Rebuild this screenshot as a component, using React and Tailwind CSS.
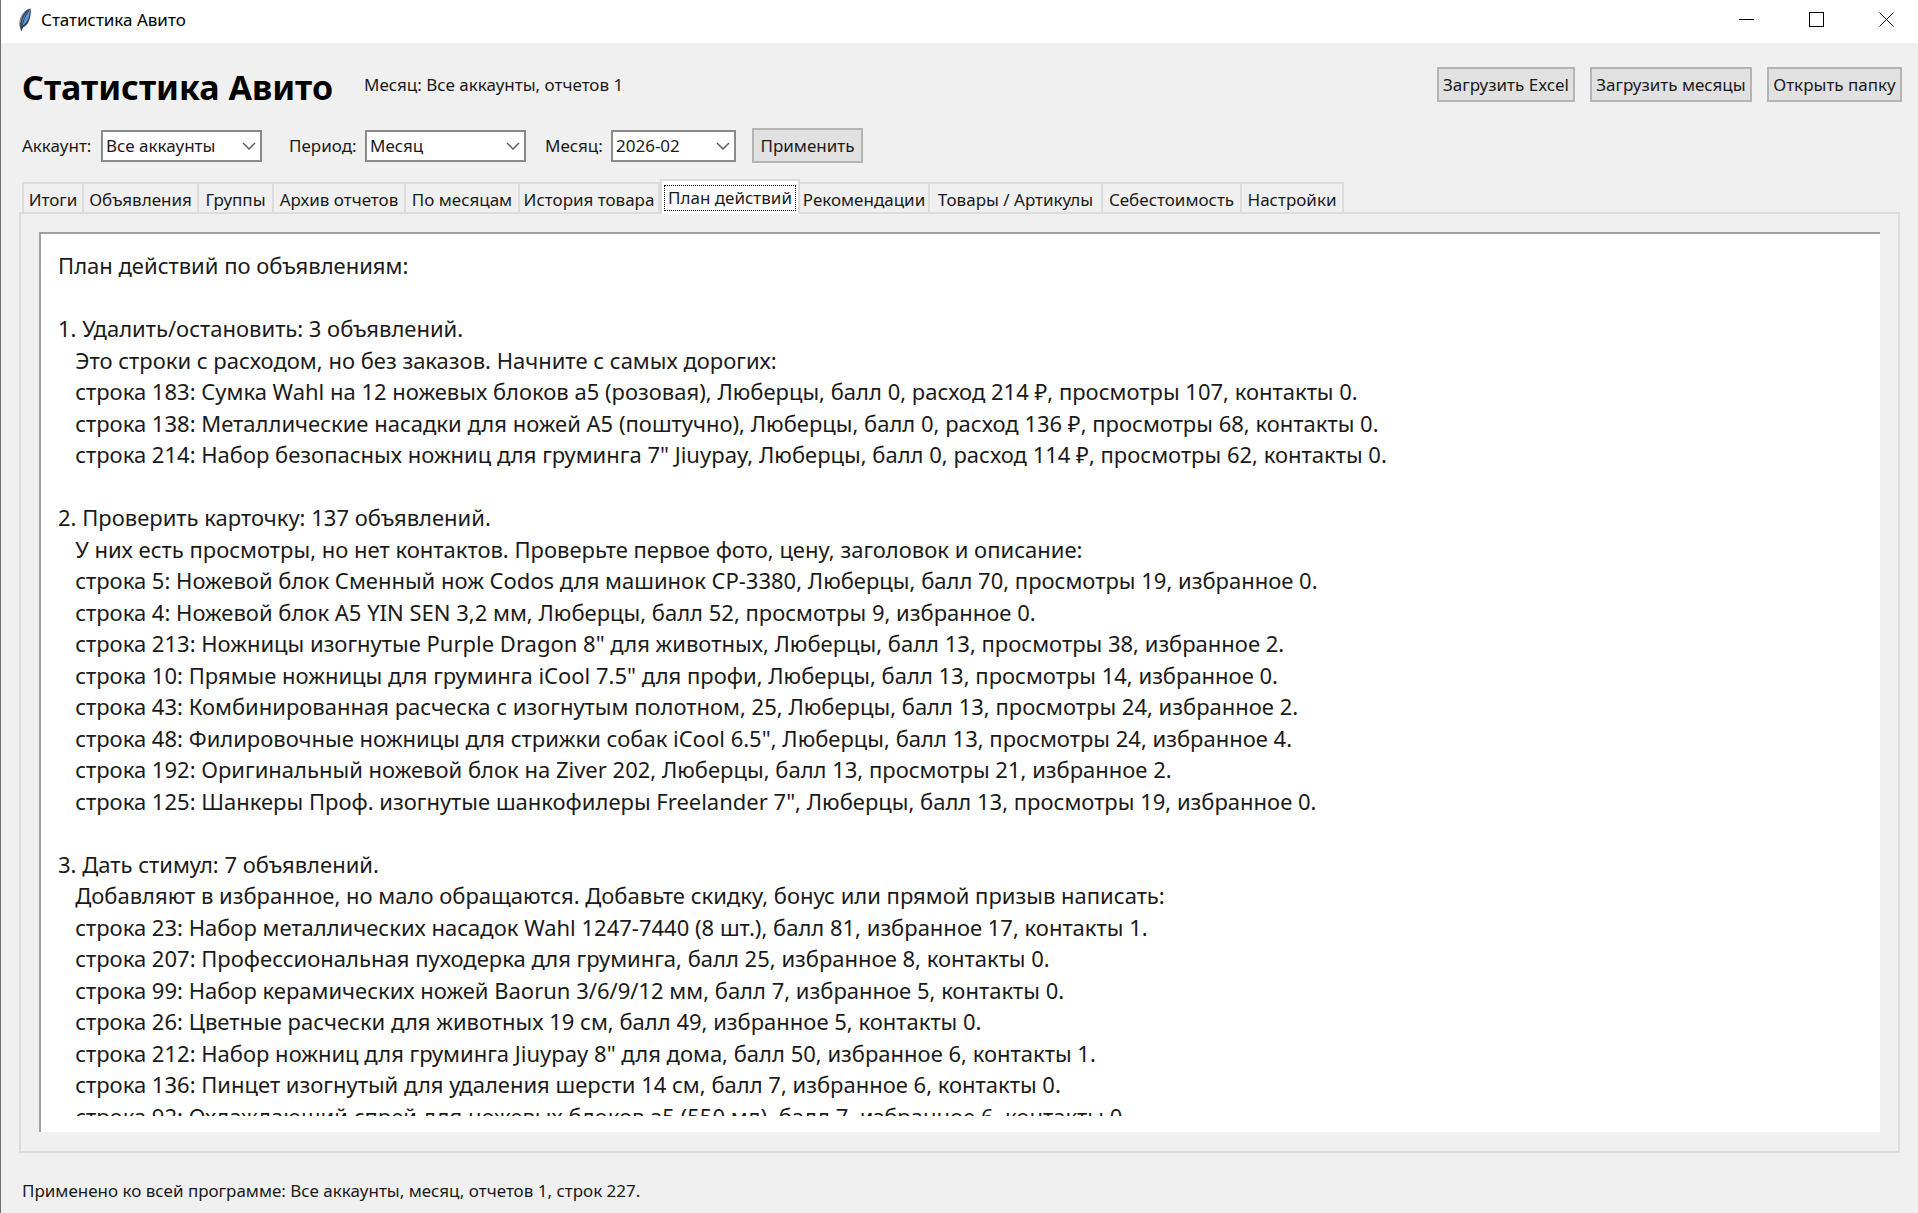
import React, { useState } from 'react';
import clsx from 'clsx';

const TABS = [
  { label: 'Итоги', width: 'w-[62px]' },
  { label: 'Объявления', width: 'w-[115px]' },
  { label: 'Группы', width: 'w-[75px]' },
  { label: 'Архив отчетов', width: 'w-[132px]' },
  { label: 'По месяцам', width: 'w-[114px]' },
  { label: 'История товара', width: 'w-[140px]' },
  { label: 'План действий', width: 'w-[140px]' },
  { label: 'Рекомендации', width: 'w-[130px]' },
  { label: 'Товары / Артикулы', width: 'w-[173px]' },
  { label: 'Себестоимость', width: 'w-[139px]' },
  { label: 'Настройки', width: 'w-[102px]' },
];

const PLAN = `План действий по объявлениям:

1. Удалить/остановить: 3 объявлений.
   Это строки с расходом, но без заказов. Начните с самых дорогих:
   строка 183: Сумка Wahl на 12 ножевых блоков а5 (розовая), Люберцы, балл 0, расход 214 ₽, просмотры 107, контакты 0.
   строка 138: Металлические насадки для ножей A5 (поштучно), Люберцы, балл 0, расход 136 ₽, просмотры 68, контакты 0.
   строка 214: Набор безопасных ножниц для груминга 7" Jiuypay, Люберцы, балл 0, расход 114 ₽, просмотры 62, контакты 0.

2. Проверить карточку: 137 объявлений.
   У них есть просмотры, но нет контактов. Проверьте первое фото, цену, заголовок и описание:
   строка 5: Ножевой блок Сменный нож Codos для машинок CP-3380, Люберцы, балл 70, просмотры 19, избранное 0.
   строка 4: Ножевой блок A5 YIN SEN 3,2 мм, Люберцы, балл 52, просмотры 9, избранное 0.
   строка 213: Ножницы изогнутые Purple Dragon 8" для животных, Люберцы, балл 13, просмотры 38, избранное 2.
   строка 10: Прямые ножницы для груминга iCool 7.5" для профи, Люберцы, балл 13, просмотры 14, избранное 0.
   строка 43: Комбинированная расческа с изогнутым полотном, 25, Люберцы, балл 13, просмотры 24, избранное 2.
   строка 48: Филировочные ножницы для стрижки собак iCool 6.5", Люберцы, балл 13, просмотры 24, избранное 4.
   строка 192: Оригинальный ножевой блок на Ziver 202, Люберцы, балл 13, просмотры 21, избранное 2.
   строка 125: Шанкеры Проф. изогнутые шанкофилеры Freelander 7", Люберцы, балл 13, просмотры 19, избранное 0.

3. Дать стимул: 7 объявлений.
   Добавляют в избранное, но мало обращаются. Добавьте скидку, бонус или прямой призыв написать:
   строка 23: Набор металлических насадок Wahl 1247-7440 (8 шт.), балл 81, избранное 17, контакты 1.
   строка 207: Профессиональная пуходерка для груминга, балл 25, избранное 8, контакты 0.
   строка 99: Набор керамических ножей Baorun 3/6/9/12 мм, балл 7, избранное 5, контакты 0.
   строка 26: Цветные расчески для животных 19 см, балл 49, избранное 5, контакты 0.
   строка 212: Набор ножниц для груминга Jiuypay 8" для дома, балл 50, избранное 6, контакты 1.
   строка 136: Пинцет изогнутый для удаления шерсти 14 см, балл 7, избранное 6, контакты 0.
   строка 92: Охлаждающий спрей для ножевых блоков а5 (550 мл), балл 7, избранное 6, контакты 0.`;

const FeatherIcon = () => (
  <svg className="h-6 w-4" viewBox="0 0 16 24" aria-hidden="true">
    <path d="M13.500.5C9 1 4.500 6 3 11.500c-.8 3-.6 5.500 0 7.500l1.200 4.500L6 19.500c4-2 6.500-6 7.300-11 .5-3 .7-6 .2-8z" fill="#3a4450" />
    <path d="M12.800 2C9.500 4 6.500 8 5.200 13l-.7 5c3.500-1.500 6.500-5.500 7.500-10 .5-2.500 1-4.500.8-6z" fill="#5c9ae6" />
    <path d="M11.500 3.500C8 8 5.500 14 4.300 22" fill="none" stroke="#24425f" strokeWidth="1" />
    <path d="M8 3.500C5 7 3.500 11 3.200 15" fill="none" stroke="#8e9aa6" strokeWidth="1" />
  </svg>
);

const WindowButton = ({ label, children }) => (
  <button aria-label={label} className="flex h-[39px] w-4 items-center justify-center">
    <svg className="h-4 w-4" viewBox="0 0 16 16" fill="none" stroke="#000" shapeRendering="crispEdges" aria-hidden="true">
      {children}
    </svg>
  </button>
);

const Button = ({ className, children }) => (
  <button className={clsx('h-[35px] border-2 border-[#b4b4b4] bg-[#e1e1e1] text-center whitespace-nowrap', className)}>
    {children}
  </button>
);

const Combo = ({ id, label, options, className, width }) => (
  <div className={clsx('flex items-center', className)}>
    <label htmlFor={id}>{label}</label>
    <div className={clsx('relative', width)}>
      <select id={id} className="block h-8 w-full appearance-none rounded-none border-2 border-[#8a8a8a] bg-white pl-[3px]">
        {options.map(option => (
          <option key={option}>{option}</option>
        ))}
      </select>
      <svg className="pointer-events-none absolute top-3 right-1.5 h-2 w-3.5" viewBox="0 0 14 8" fill="none" stroke="#606060" strokeWidth="1.5" aria-hidden="true">
        <path d="M1 1l6 6 6-6" />
      </svg>
    </div>
  </div>
);

const App = () => {
  const [activeTab, setActiveTab] = useState('План действий');

  return (
    <div className="flex h-screen flex-col border-l border-[#707070] bg-[#f0f0f0] font-['Noto_Sans',sans-serif] text-[17px] leading-6 text-[#1a1a1a]">
      <header className="flex h-[43px] shrink-0 items-start bg-white text-black">
        <div className="flex h-10 items-center gap-2 pl-4">
          <FeatherIcon />
          <span>Статистика Авито</span>
        </div>
        <div className="ml-auto flex gap-[54px] pr-[23px]">
          <WindowButton label="Свернуть">
            <path d="M0 7.500h15" />
          </WindowButton>
          <WindowButton label="Развернуть">
            <path d="M.5.5h14v14H.5z" />
          </WindowButton>
          <WindowButton label="Закрыть">
            <path d="M.5.5l14 14M14.500.5l-14 14" shapeRendering="auto" />
          </WindowButton>
        </div>
      </header>

      <section className="flex h-[83px] shrink-0 items-center pr-4 pl-[21px]">
        <h1 className="pt-1 text-[34px] leading-10 font-bold text-black">Статистика Авито</h1>
        <p className="ml-[31px]">Месяц: Все аккаунты, отчетов 1</p>
        <div className="ml-auto flex gap-[15px]">
          <Button className="w-[138px]">Загрузить Excel</Button>
          <Button className="w-[162px]">Загрузить месяцы</Button>
          <Button className="w-[135px]">Открыть папку</Button>
        </div>
      </section>

      <section className="mt-0.5 flex shrink-0 items-center pl-[21px]">
        <Combo id="account" label="Аккаунт:" options={['Все аккаунты']} className="w-[240px] justify-between" width="w-[161px]" />
        <Combo id="period" label="Период:" options={['Месяц']} className="ml-[27px] w-[237px] justify-between" width="w-[161px]" />
        <Combo id="month" label="Месяц:" options={['2026-02']} className="ml-[19px] w-[191px] justify-between" width="w-[125px]" />
        <Button className="ml-4 w-[111px]">Применить</Button>
      </section>

      <main className="mx-[18px] mt-4 flex min-h-0 flex-1 flex-col">
        <div role="tablist" className="z-10 -mb-0.5 flex items-end pl-[3px]">
          {TABS.map(tab => (
            <button
              key={tab.label}
              role="tab"
              aria-selected={tab.label === activeTab}
              onClick={() => setActiveTab(tab.label)}
              className={clsx(
                'shrink-0 border-[#dcdcdc] whitespace-nowrap',
                tab.width,
                tab.label === activeTab
                  ? 'h-[35px] border-x-2 border-t-2 bg-white p-0.5'
                  : 'h-8 border-y-2 border-r-2 pt-1 first:border-l-2'
              )}
            >
              {tab.label === activeTab ? (
                <span className="block border border-dotted border-black leading-6">{tab.label}</span>
              ) : (
                tab.label
              )}
            </button>
          ))}
        </div>

        <div role="tabpanel" className="flex min-h-0 flex-1 flex-col border-2 border-[#dcdcdc] px-[18px] pt-[18px] pb-[19px]">
          <div className="flex min-h-0 flex-1 flex-col border-t-2 border-l-2 border-[#a0a0a0] bg-white py-4 pl-[17px]">
            <div className="min-h-0 flex-1 overflow-hidden text-[22px]">
              {PLAN.split('\n').map((line, i) => (
                <p key={i} className="h-[31px] leading-[31px] whitespace-pre even:h-8 even:leading-8">
                  {line}
                </p>
              ))}
            </div>
          </div>
        </div>
      </main>

      <footer className="flex h-[60px] shrink-0 items-center pt-4 pl-[21px]">
        Применено ко всей программе: Все аккаунты, месяц, отчетов 1, строк 227.
      </footer>
    </div>
  );
};

export default App;
